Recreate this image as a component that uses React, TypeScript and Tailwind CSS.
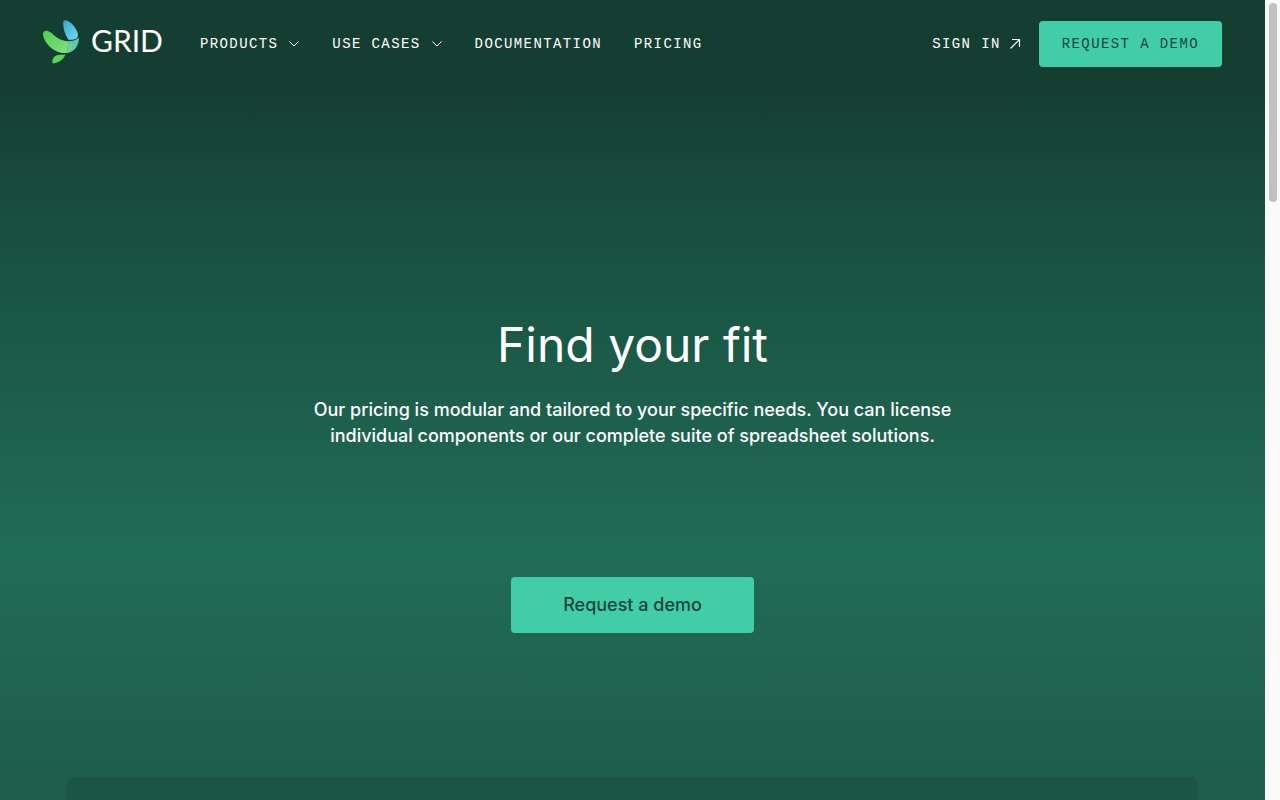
const menus = ["Products", "Use cases"];
const links = ["Documentation", "Pricing"];

function Logo() {
  return (
    <a href="#" aria-label="Grid home" className="flex items-start gap-3 pb-1">
      <svg viewBox="0 0 37 44" className="h-11 w-[37px]" aria-hidden="true">
        <defs>
          <linearGradient id="wing" x1="0" y1="0" x2="1" y2="1">
            <stop offset="0" stopColor="#36a6c6" />
            <stop offset="1" stopColor="#74dcf4" />
          </linearGradient>
          <linearGradient id="body" x1="0" y1="0" x2="1" y2="1">
            <stop offset="0" stopColor="#4cd04f" />
            <stop offset="1" stopColor="#86de84" />
          </linearGradient>
          <linearGradient id="side" x1="1" y1="0" x2="0" y2="1">
            <stop offset="0" stopColor="#4fc4a5" />
            <stop offset="1" stopColor="#74d4a4" />
          </linearGradient>
        </defs>
        <path d="M26.4 19.8C23 15 20.800 8 21.200 2.500C21.400 0 23.500 -0.300 26 1C30 3 34 8 35.500 12.500C36.500 16 35.500 18 33 19C31 19.800 28.500 20 26.400 19.800Z" fill="url(#wing)" />
        <path d="M1 15C0.600 11.500 3 10 6.500 11.200C10 12.500 12.500 16 16 18.200C19 20 22.500 21 26.200 21.200C26.300 25 25.700 29 24.500 33C18 33.800 11.500 30.500 7 26C4 23 1.500 18.500 1 15Z" fill="url(#body)" />
        <path d="M26.200 21.200C30.500 21.300 34.500 20.200 36.600 17.200C38 24 32.500 32.300 24.500 33C25.700 29 26.300 25 26.200 21.200Z" fill="url(#side)" />
        <path d="M23.500 34.500C21.500 39.500 16 43.500 10.500 43.300C9.800 39 12 35.400 16.500 34.900C19 34.700 21 35 23.500 34.500Z" fill="#58d65a" />
      </svg>
      <span className="font-['Lato'] text-3xl leading-10 tracking-normal text-white">GRID</span>
    </a>
  );
}

function Chevron() {
  return (
    <svg viewBox="0 0 12 12" className="mt-px size-3" fill="none" stroke="currentColor" strokeWidth="1" aria-hidden="true">
      <path d="M1.500 3.500L6 8L10.500 3.500" />
    </svg>
  );
}

function Arrow() {
  return (
    <svg viewBox="0 0 12 12" className="size-3" fill="none" stroke="currentColor" strokeWidth="1.2" aria-hidden="true">
      <path d="M1.500 10.500L10.500 1.500M3 1.500H10.500V9" />
    </svg>
  );
}

function Header() {
  return (
    <header className="flex h-[87px] items-center justify-between pr-[43px] pl-[42px] font-['Liberation_Mono',monospace] text-sm tracking-widest text-white uppercase">
      <div className="flex items-center gap-[37px]">
        <Logo />
        <nav className="flex items-center gap-8">
          {menus.map((menu) => (
            <button key={menu} type="button" className="flex items-center gap-[10px] uppercase">
              {menu}
              <Chevron />
            </button>
          ))}
          {links.map((link) => (
            <a key={link} href="#">
              {link}
            </a>
          ))}
        </nav>
      </div>
      <div className="flex items-center gap-[18px]">
        <a href="#" className="flex items-center gap-2">
          Sign in
          <Arrow />
        </a>
        <button type="button" className="h-[46px] rounded bg-[#40cda8] px-[23px] text-[#1c4343] uppercase">
          Request a demo
        </button>
      </div>
    </header>
  );
}

export default function App() {
  return (
    <div className="flex h-screen overflow-hidden font-['Inter',sans-serif]">
      <div className="flex min-w-0 flex-1 flex-col bg-[linear-gradient(#153e32_11%,#184d3d_25%,#1c5c49_46%,#216c57_69%,#1e5c4b)]">
        <Header />
        <main className="flex flex-1 flex-col items-center text-center text-white">
          <h1 className="mt-[228px] text-5xl leading-[60px]">Find your fit</h1>
          <p className="mt-[22px] max-w-[660px] text-lg leading-[26px] font-medium">
            Our pricing is modular and tailored to your specific needs. You can license individual
            components or our complete suite of spreadsheet solutions.
          </p>
          <button type="button" className="mt-32 h-14 w-[243px] rounded bg-[#40cda8] text-lg font-medium text-[#1c4343]">
            Request a demo
          </button>
          <section className="mt-36 w-full flex-1 px-[67px]">
            <div className="h-full rounded-t-lg bg-[#1b5545]" />
          </section>
        </main>
      </div>
      {/* Scroll track */}
      <div className="w-[15px] bg-[#fafafa] px-1 pt-[3px]">
        <div className="h-1/4 w-2 rounded-full bg-[#c1c1c1]" />
      </div>
    </div>
  );
}
